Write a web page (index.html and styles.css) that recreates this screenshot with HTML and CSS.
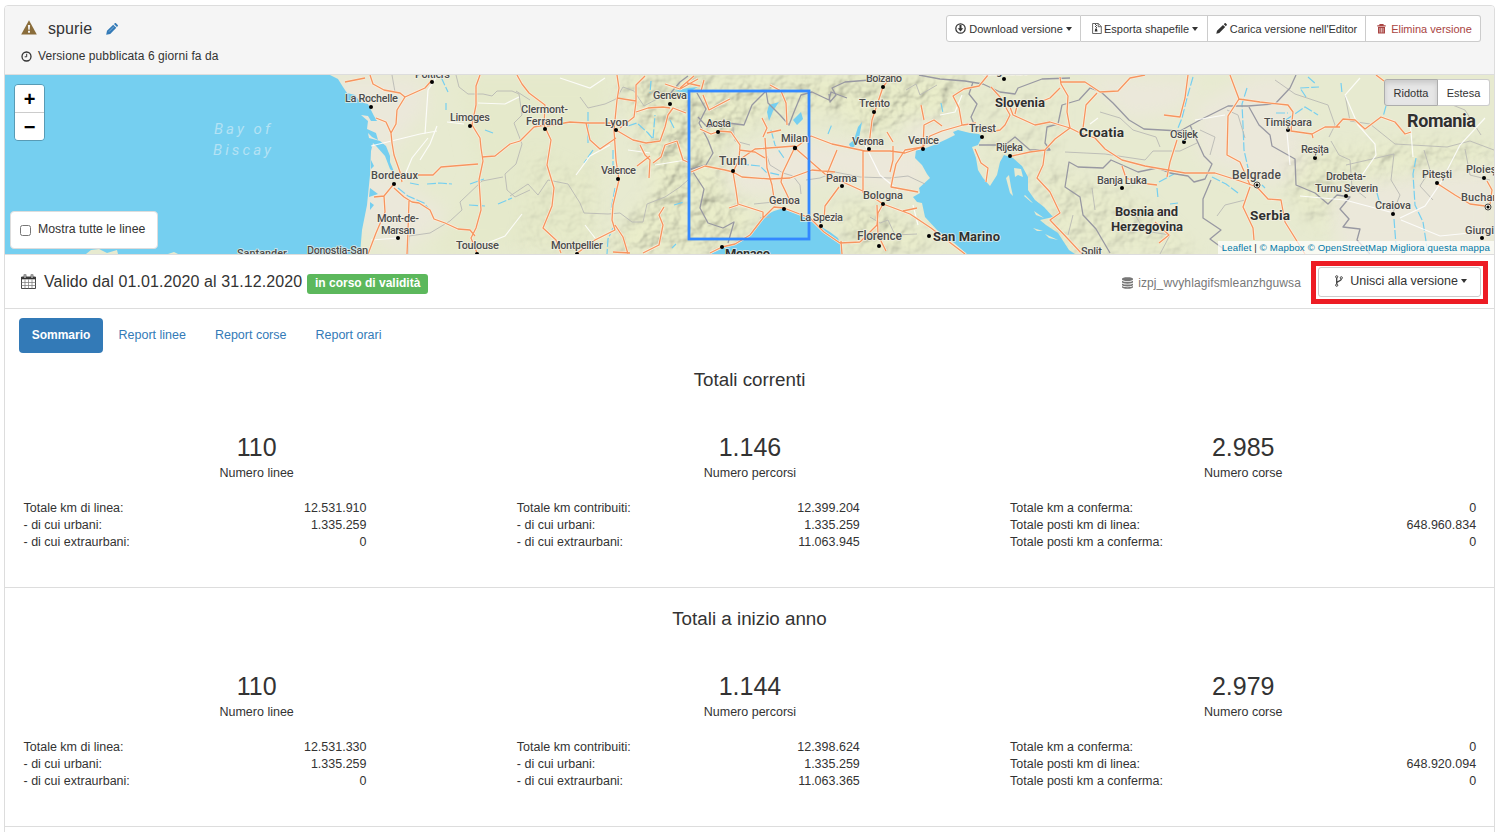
FILE: index.html
```html
<!DOCTYPE html>
<html lang="it">
<head>
<meta charset="utf-8">
<title>Versione spurie</title>
<link rel="stylesheet" href="styles.css">
</head>
<body>
<main class="panel">
  <header class="head">
    <div class="head-info">
      <h1 class="title">
        <svg class="ic-warn" width="16" height="15" viewBox="0 0 16 15"><path d="M8 0.3 15.8 14.6H.2z" fill="#8a6d3b"/><path d="M6.9 5h2.2l-.4 4.8H7.3zM7 10.8h2v1.900H7z" fill="#f5f5f5"/></svg>
        <span class="name">spurie</span>
        <svg class="ic-pen" width="12" height="12" viewBox="0 0 12 12" fill="#337ab7"><path d="M.2 11.800 1 7.800 7.200 1.700l3.100 3.100L4.200 11zM8 1.100l.8-.8c.4-.4.8-.4 1.200 0l1.700 1.700c.4.4.4.8 0 1.200l-.8.8z"/><path d="M3 8.600 8 3.600" stroke="#9cc3e4" stroke-width=".7" fill="none"/></svg>
      </h1>
      <p class="published">
        <svg width="11" height="11" viewBox="0 0 11 11" fill="none" stroke="#333" stroke-width="1.300"><circle cx="5.500" cy="5.500" r="4.500"/><path d="M5.700 2.800v3H3.700" stroke-width="1"/></svg>
        Versione pubblicata 6 giorni fa da
      </p>
    </div>
    <div class="btn-group">
      <button class="btn b1"><svg width="11" height="11" viewBox="0 0 11 11" fill="none" stroke="#333"><circle cx="5.500" cy="5.500" r="4.700" stroke-width="1.200"/><path d="M5.500 2v4" stroke-width="2"/><path d="M2.700 5.200h5.600L5.500 8.500z" fill="#333" stroke="none"/></svg>Download versione<i class="caret"></i></button>
      <button class="btn b2"><svg width="10" height="11" viewBox="0 0 10 11" fill="none" stroke="#555" stroke-width=".9"><path d="M.6.5h5.700l3 3v7H.6zM6.200.5v3.200h3"/><path d="M3.500 1v1M4.500 2v1M3.500 3v1M4.500 4v1" stroke="#333"/><path d="M3.300 5.500h1.600l.6 3H2.700z" fill="#333" stroke="none"/></svg>Esporta shapefile<i class="caret"></i></button>
      <button class="btn b3"><svg width="11" height="11" viewBox="0 0 11 11" fill="#333"><path d="M.3 10.700 1 7.700 7 1.900l2.200 2.200L3.300 10zM7.800 1.200l.9-.9c.3-.3.7-.3 1 0l1 1c.3.3.3.7 0 1l-.9.9z"/></svg>Carica versione nell'Editor</button>
      <button class="btn b4"><svg width="9" height="10" viewBox="0 0 9 10"><path d="M3 1.200V.6h3v.6M.3 1.900h8.400" stroke="#a94442" fill="none" stroke-width="1.200"/><path d="M1 3h7v6.500H1z" fill="#a94442"/><path d="M2.900 4v4.500M4.500 4v4.500M6.100 4v4.500" stroke="#fff" stroke-width=".6"/></svg>Elimina versione</button>
    </div>
  </header>

  <section class="map">
    <svg class="map-canvas" width="1489" height="179" viewBox="5 75 1489 179">
      <defs>
        <filter id="soft" x="-30%" y="-30%" width="160%" height="160%"><feGaussianBlur stdDeviation="9"/></filter>
        <filter id="relief" x="0" y="0" width="100%" height="100%">
          <feTurbulence type="fractalNoise" baseFrequency=".055" numOctaves="3" seed="7"/>
          <feColorMatrix type="matrix" values="0 0 0 0 0  0 0 0 0 0  0 0 0 0 0  1 0 0 0 0"/>
          <feDiffuseLighting surfaceScale="7" diffuseConstant="1.200" lighting-color="#dde0b4"><feDistantLight azimuth="225" elevation="55"/></feDiffuseLighting>
        </filter>
        <mask id="hills">
          <g fill="#fff" filter="url(#soft)">
            <path d="M620 75H965L950 112 905 120 875 140 840 112 770 112 730 135 712 160 730 200 760 220 720 254H600L655 190 640 130z"/>
            <path d="M835 205 870 202 940 240 920 254H850z" opacity=".8"/>
            <path d="M530 150 600 180 600 254H520z" opacity=".35"/>
            <path d="M1030 180 1060 170 1140 200 1200 254H1060z" opacity=".6"/>
            <path d="M1290 155 1420 140 1495 145V165L1420 168 1340 180 1320 230 1290 200z" opacity=".65"/>
            <path d="M960 90H1060V180H1000z" opacity=".3"/>
          </g>
        </mask>
      </defs>
      <rect x="5" y="75" width="1490" height="180" fill="#e7ead0"/>
      <g filter="url(#soft)">
        <path d="M330 75H420L430 105 380 165 450 215 400 254 340 210z" fill="#ebe8da"/>
        <path d="M730 155 790 140 870 145 925 150V195L880 190 830 175 770 195 730 190zM905 120 960 125 950 150 910 145z" fill="#ece8da"/>
        <path d="M1195 105 1255 75H1290L1310 170 1270 185 1200 160zM1330 190 1495 165V254H1340zM1080 75 1200 80 1180 110 1130 120z" fill="#ebe8da"/>
        <path d="M460 75 610 75 590 245 430 254 480 180z" fill="#e5e9cb"/>
      </g>
      <rect x="5" y="75" width="1490" height="180" filter="url(#relief)" mask="url(#hills)" opacity=".42"/>

      <g fill="#75cff0">
        <path d="M5 75H330L338 79 343 87 347 93 355 95 360 102 368 104 374 116 377 121 371 121 368 116 361 115 368 121 367 129 376 133 378 140 372 137 368 133 369 138 380 141 386 146 390 156 390 162 395 174 390 169 385 156 377 147 373 143 371 151 370 175 367 205 362 230 360 254H178L174 252 168 254H118L117 250 107 253 99 249 91 250 86 254H5z"/>
        <path d="M371 160l3 6-3 3zM370 188l8 6-9 3zM370 202l4 3-4 5z"/>
        <path d="M736 244 748 238 760 221 766 215 774 211 784 208 795 211 808 217 820 226 830 232 838 238 841 245 842 254H710L723 247z"/>
        <path d="M923 149 934 145 947 139 955 135 953 132 958 130 970 133 979 134 982 137 978 145 972 147 976 158 978 170 983 178 990 186 997 175 1000 162 1004 155 1013 158 1022 166 1028 177 1028 190 1035 200 1044 207 1053 217 1040 220 1046 225 1058 233 1069 250 1075 254H967L953 242 937 230 925 217 922 203 917 202 913 197 920 193 919 188 930 178 927 174 922 165 915 158 916 150z"/>
        <path d="M674 91l14-3 10-1-11 6zM769 105l10-3-6 9-4 10-2-9zM793 120l8-8 2 7-6 6zM853 143l5-16 4-5-3 16-5 9zM849 144l5-4 3 4-6 5z"/>
      </g>
      <g fill="#e7ead0"><path d="M1006 178l3-3 2 12 2 9-3-3zM1014 168l7 1 2 8-5-2-3 2zM1025 195l8 8-2-1-7-6zM1034 211l10 7-8-3zM1040 221l20 8-9-3zM1045 234l13 6-9-2z"/><path d="M1033 228l10 3-6 0z"/></g>

      <!-- rivers -->
      <g class="river">
        <path d="M410 183 420 185M427 184 440 183 452 184M470 184 484 179M441 77 448 92M446 103 446 110M485 130 493 133M398 188 408 196 424 203 432 213M469 205 485 206M498 204 512 198"/>
        <path d="M628 126 637 123 648 133 653 139 655 115M651 81 650 93M613 150 613 166M615 188 611 210M613 228 608 239 607 254M588 112 588 145M593 150 584 163M670 120 674 128M674 205 684 202M672 248 676 244"/>
        <path d="M740 164 760 166 766 172 780 175M771 130 775 145 784 158M828 134 832 124M941 103 943 113"/>
        <path d="M1193 77 1187 98 1182 118 1178 128M1247 88 1242 104 1243 125 1244 150 1248 168M1212 177 1226 184 1238 193M1159 182 1174 174M1157 188 1158 198M1170 204 1178 203"/>
        <path d="M1386 106 1383 117M1416 158 1413 174 1415 205 1423 222 1428 254M1377 193 1380 204M1394 219 1396 245M1277 126 1305 107 1318 115M1306 97 1300 88 1319 87M1276 113 1288 113M1262 185 1265 188M1308 77 1316 84M1341 83 1342 93"/>
      </g>
      <!-- regional and national boundaries -->
      <g class="region">
        <path d="M392 75 395 92M456 75 459 87 468 94 483 94 492 96 497 91 512 91 519 94 522 115 514 123 522 144 516 164 505 174 507 190 515 197 530 190M408 254 409 236 430 233 450 221 462 210 460 202 482 181 503 177"/>
        <path d="M510 196 528 184 538 195 548 180 568 184 580 203 584 213 608 214 620 213 632 222 643 222 647 204 665 197 680 187 688 180M580 97 588 108 605 104 616 99 623 87 634 91 644 106 657 99M516 91 530 100"/>
        <path d="M733 127 735 141 750 145M767 156 770 165 783 173 793 176 800 185 801 194M754 204 774 202 790 200M760 218 771 217M806 180 820 178 835 172 860 177 890 178 908 176 925 184M870 217 880 223 888 220 895 235 917 234M906 90 916 84 920 95 937 85"/>
        <path d="M1100 112 1120 118 1133 130 1156 137 1160 147M1065 152 1105 154 1145 160 1153 151 1180 151 1197 143M1073 215 1068 235M1135 215 1145 231 1170 235 1160 254M1092 188 1095 210M1200 130 1215 137 1210 155M1227 110 1238 115 1245 138M1217 216 1225 205 1245 200"/>
        <path d="M1275 80 1295 94 1328 105 1335 125 1329 137M1345 95 1350 121 1370 124 1395 144 1447 147 1470 141 1494 150M1331 141 1339 155 1350 160 1352 187 1366 198M1346 165 1394 154 1391 180 1400 195 1392 215M1424 150 1430 170 1420 186 1433 200M1440 100 1465 110 1481 135M1465 149 1470 175 1490 180"/>
      </g>
      <g class="border">
        <path d="M669 95 680 82 688 76M697 93 706 109 699 123 708 140 713 153 706 165 691 169 704 189 700 208 708 223 723 228 734 222 728 243M698 117 707 127 728 123 744 125 752 105 766 91M766 91 768 103 780 115 789 125 794 112 801 95 812 92 829 100 831 92 847 98"/>
        <path d="M829 94 830 102 836 95 832 88 845 82 870 80 870 75M919 75 940 79 965 81 983 84 1000 92 1015 94 1018 88 1042 79 1070 78M973 82 969 94 977 104 971 117 977 131M979 145 994 145 1005 145 1015 137 1030 150 1050 150 1045 143 1047 127 1058 124 1062 105 1079 100 1090 88 1101 92 1113 103 1129 120 1144 129 1180 131 1200 120 1228 106 1248 106 1275 104 1290 88 1296 75"/>
        <path d="M1190 125 1199 145 1204 156 1212 164 1205 179 1194 182 1188 176 1170 173 1157 168 1138 172 1111 160 1103 168 1078 167 1069 162 1065 187 1080 197 1083 215 1096 229 1110 253M1211 180 1203 199 1203 218 1221 230 1210 239 1225 250"/>
        <path d="M1249 107 1259 125 1270 135 1272 146 1295 159 1296 185 1315 193 1328 204 1337 195 1350 197 1340 209 1349 219 1343 227 1360 229 1357 240 1370 254"/>
      </g>
      <!-- minor roads -->
      <g class="minor">
        <path d="M371 146 420 134 437 131M420 160 430 144 437 126M425 134 428 90 436 78M478 103 505 104 519 97M447 122 464 124M371 240 398 238M480 246 505 236 522 214M402 182 412 158 428 138M560 78 590 88 605 78M610 145 590 156 576 175M585 225 595 238M655 165 686 160M628 150 650 153M865 145 880 175 898 190M913 205 918 225M940 115 955 112 962 95M1287 133 1290 165M1360 78 1345 95 1358 125 1375 144 1376 155 1360 178M1400 218 1425 206 1440 184 1460 145 1485 118M1300 196 1345 200 1390 212M1401 220 1440 236 1480 232M1410 120 1413 157M1195 120 1225 115M1090 124 1098 118"/>
      </g>
      <!-- motorways: pale casing below, orange line on top -->
      <g class="casing"><g id="roads">
        <path d="M370 75 373 84 384 90 400 93 405 97M345 82 365 78M405 97 397 110 396 124 391 133 392 143 394 155 400 172 402 182M480 75 476 86 476 105 472 125 480 138 481 148 483 161 479 180 481 210 476 228 471 238 477 253M394 188 404 197 412 202 419 203 430 210 434 219 445 223 458 229 470 230 475 236M393 185 384 196 385 212 376 233 368 254M384 196 374 197M409 201 408 230 407 254M418 175 433 175 441 167 478 164M391 133 386 122 376 118M405 97 425 88 432 80M482 157 495 156 510 144 520 141 534 127 545 125M517 75 522 84 529 93 545 105 544 125 551 140 547 165 554 188 552 206 543 228 556 240 561 253M547 126 570 122 586 123 612 123M586 123 590 140 600 149 616 138M617 75 619 88 617 100 614 130 616 160 619 180 613 205 612 220 615 230 595 240 576 254M615 225 623 237 628 254M613 252 630 253M616 130 633 140 646 143 660 141 665 127 668 115 673 108 686 113M620 128 634 117 636 102 636 85 645 76M617 98 636 101M636 112 648 108 663 107 670 108M640 145 645 155 650 160 649 178M653 163 661 157 665 145 677 141 683 160 690 163M637 166 650 156M664 207 659 215 663 225 659 245 643 253M665 84 680 89 698 79M694 76 680 88M687 83 700 86"/>
        <path d="M691 172 705 166 725 170 733 172 739 160 755 149 795 146M795 148 811 136 832 144 865 151 890 151 905 153 923 147 930 136 942 131 963 125 976 123M733 172 742 177 770 179 790 178 812 170 835 172M733 172 736 190 738 204 763 212 763 218 750 235 735 244 722 247 710 253M738 205 729 208M763 218 774 207 784 208M795 147 783 172 781 182 792 205M765 138 767 168 772 185 775 205M763 137 767 128 762 118M767 133 781 130M787 125 786 103 781 91 770 85M703 95 709 110 730 99M701 91 704 80M718 131 731 132 740 145 739 160M700 129 711 134 717 132M739 150 755 152 765 158M795 148 825 174 865 192 883 204 910 214 931 228 965 254M837 150 827 174M863 150 863 193M839 187 825 206 824 220M784 208 810 218 824 232 840 243 860 242M841 241 842 254M860 242 877 225 878 213 883 204M877 205 878 235 886 251M869 145 872 120 877 105 883 87 892 75M893 146 893 160 890 172M893 142 887 132M923 147 905 150 896 164 893 177 891 187 918 192M923 147 924 125 934 120 942 126M921 105 924 120M962 125 959 108 953 96 964 89 979 86 988 75M903 211 917 208M991 87 1000 97 1010 115 1005 125 1000 130 990 132M975 149 981 163 988 168 986 182M1012 156 1030 152 1045 150 1043 165 1037 178 1050 192 1060 213 1050 220 1069 240 1082 254M1013 115 1035 125 1050 122 1070 128 1080 133 1095 138 1105 149 1122 160 1145 166 1185 173 1215 173 1240 181 1257 187M1045 150 1055 139 1070 128M1013 115 1010 107M1015 114 1017 106"/>
        <path d="M1070 128 1067 112 1068 96 1061 84 1060 77M1040 102 1050 98 1060 88M1060 82 1085 82 1100 92 1118 91 1130 78 1145 75M1083 128 1086 105 1097 93M1177 140 1170 162 1167 177M1188 75 1185 98 1180 117 1164 115M1122 166 1126 178 1140 183 1157 185M1155 222 1169 235 1159 243M1230 75 1239 99 1228 116 1227 155 1240 162 1250 185M1239 99 1260 102 1288 105 1293 112 1291 131 1312 134 1325 127 1340 127M1250 187 1243 207 1253 228 1254 240M1257 187 1268 199 1281 200 1285 222 1305 254M1336 127 1343 119 1355 120 1365 129 1381 117 1395 122 1405 134 1411 132M1438 184 1455 195 1470 204 1485 206M1312 134 1313 138M1376 75 1384 81M1487 181 1492 190 1490 204"/>
      </g></g>
      <use href="#roads" class="motorway"/>

      <rect x="689" y="91" width="120" height="148" fill="none" stroke="#3388ff" stroke-width="2.800"/>

      <g class="dots">
        <circle cx="371" cy="107" r="2"/><circle cx="432" cy="82" r="2"/><circle cx="470" cy="126" r="2"/><circle cx="394" cy="184" r="2"/><circle cx="398" cy="238" r="2"/><circle cx="477" cy="254" r="2"/><circle cx="545" cy="129" r="2"/><circle cx="616" cy="130" r="2"/><circle cx="618" cy="179" r="2"/><circle cx="577" cy="254" r="2"/><circle cx="670" cy="104" r="2"/><circle cx="718" cy="132" r="2"/><circle cx="795" cy="148" r="2.200"/><circle cx="733" cy="171" r="2"/><circle cx="784" cy="209" r="2"/><circle cx="821" cy="226" r="2"/><circle cx="842" cy="186" r="2"/><circle cx="722" cy="247" r="2"/><circle cx="883" cy="87" r="2"/><circle cx="874" cy="112" r="2"/><circle cx="869" cy="149" r="2"/><circle cx="923" cy="149" r="2"/><circle cx="883" cy="204" r="2"/><circle cx="879" cy="246" r="2"/><circle cx="929" cy="236" r="2"/><circle cx="982" cy="137" r="2"/><circle cx="1010" cy="156" r="2"/><circle cx="1004" cy="79" r="2"/><circle cx="1184" cy="142" r="2"/><circle cx="1122" cy="188" r="2"/><circle cx="1288" cy="130" r="2"/><circle cx="1315" cy="158" r="2"/><circle cx="1346" cy="196" r="2"/><circle cx="1393" cy="214" r="2"/><circle cx="1437" cy="183" r="2"/><circle cx="1484" cy="178" r="2"/><circle cx="1482" cy="238" r="2"/>
        <g fill="#f2efe4" stroke="#222" stroke-width=".8"><circle cx="1257" cy="185" r="3"/><circle cx="1488" cy="207" r="3"/></g><circle cx="1257" cy="185" r="1.500"/><circle cx="1488" cy="207" r="1.500"/>
      </g>
      <g class="places">
        <text x="415" y="78" textLength="35">Poitiers</text><text x="345" y="102" textLength="53">La Rochelle</text><text x="450" y="121" textLength="40">Limoges</text><text x="371" y="179" textLength="47">Bordeaux</text><text x="377" y="222" textLength="42">Mont-de-</text><text x="381" y="234" textLength="34">Marsan</text><text x="456" y="249" textLength="43">Toulouse</text><text x="237" y="257" textLength="50">Santander</text><text x="307" y="254" textLength="61">Donostia-San</text>
        <text x="521" y="113" textLength="47">Clermont-</text><text x="526" y="125" textLength="37">Ferrand</text><text x="605" y="126" textLength="23">Lyon</text><text x="601" y="174" textLength="35">Valence</text><text x="551" y="249" textLength="52">Montpellier</text><text x="653" y="99" textLength="34">Geneva</text>
        <text x="706" y="127" textLength="25">Aosta</text><text x="781" y="142" textLength="27">Milan</text><text class="mid" x="719" y="165" textLength="28">Turin</text><text x="769" y="204" textLength="31">Genoa</text><text x="800" y="221" textLength="43">La Spezia</text><text x="826" y="182" textLength="31">Parma</text><text x="866" y="82" textLength="36">Bolzano</text><text x="859" y="107" textLength="31">Trento</text><text x="852" y="145" textLength="32">Verona</text><text x="908" y="144" textLength="31">Venice</text><text x="863" y="199" textLength="40">Bologna</text><text class="mid" x="857" y="240" textLength="45">Florence</text><text x="969" y="132" textLength="27">Triest</text><text x="996" y="151" textLength="27">Rijeka</text><text x="983" y="75" textLength="44">Klagenfurt</text>
        <text x="1170" y="138" textLength="28">Osijek</text><text x="1097" y="184" textLength="50">Banja Luka</text><text class="mid" x="1232" y="179" textLength="49">Belgrade</text><text x="1081" y="255" textLength="21">Split</text><text x="1264" y="126" textLength="48">Timișoara</text><text x="1301" y="153" textLength="28">Reșița</text><text x="1326" y="180" textLength="40">Drobeta-</text><text x="1315" y="192" textLength="63">Turnu Severin</text><text x="1375" y="209" textLength="36">Craiova</text><text x="1422" y="178" textLength="30">Pitești</text><text x="1466" y="173" textLength="37">Ploiești</text><text x="1461" y="201" textLength="51">Bucharest</text><text x="1465" y="234" textLength="35">Giurgiu</text>
      </g>
      <g class="countries">
        <text x="995" y="107" textLength="50">Slovenia</text><text class="mid" x="1079" y="137" textLength="45">Croatia</text><text x="933" y="241" textLength="67">San Marino</text><text x="725" y="258" textLength="45">Monaco</text><text x="1115" y="216" textLength="63">Bosnia and</text><text x="1111" y="231" textLength="72">Herzegovina</text><text class="mid" x="1250" y="220" textLength="40">Serbia</text><text class="big" x="1407" y="127" textLength="69">Romania</text>
      </g>
      <g class="sea"><text x="214" y="134" textLength="56">Bay of</text><text x="213" y="155" textLength="58">Biscay</text></g>
    </svg>
    <div class="zoomer"><button>+</button><button>−</button></div>
    <label class="show-all"><input type="checkbox">Mostra tutte le linee</label>
    <div class="size-switch"><button class="on">Ridotta</button><button>Estesa</button></div>
    <div class="credits"><a>Leaflet</a> | <a>© Mapbox</a> <a>© OpenStreetMap</a> <a>Migliora questa mappa</a></div>
  </section>

  <section class="validity">
    <svg class="ic-cal" width="15" height="15" viewBox="0 0 15 15" fill="none" stroke="#333"><path d="M.5 3h14v11.500H.5z" stroke-width=".9"/><path d="M.5 8.500h14M.5 11.500h14M4 5.500v9M7.500 5.500v9M11 5.500v9" stroke="#777" stroke-width=".7"/><path d="M.5 4.200h14" stroke-width="2.200"/><path d="M4 .4v4.200M11 .4v4.200" stroke-width="2.600"/><path d="M4 1v3M11 1v3" stroke="#fff" stroke-width="1"/></svg>
    <span class="range">Valido dal 01.01.2020 al 31.12.2020</span>
    <span class="badge">in corso di validità</span>
    <span class="db"><svg width="11" height="12" viewBox="0 0 11 12" fill="#777"><path d="M0 1.700C0 .9 2 .2 5.500.2S11 .9 11 1.700v.8C11 3.300 9 4 5.500 4S0 3.300 0 2.500zM0 3.700c1 .9 3 1.100 5.500 1.100S10 4.600 11 3.700v1.600c0 .8-2 1.400-5.500 1.400S0 6.100 0 5.300zM0 6.400c1 .9 3 1.100 5.500 1.100S10 7.300 11 6.400V8c0 .8-2 1.400-5.500 1.400S0 8.800 0 8zM0 9.100c1 .9 3 1.100 5.500 1.100S10 10 11 9.100v1.200c0 .8-2 1.500-5.500 1.500S0 11.100 0 10.300z"/></svg>izpj_wvyhlagifsmleanzhguwsa</span>
    <div class="highlight"><button class="merge"><svg width="8" height="12" viewBox="0 0 8 12" fill="none" stroke="#444"><circle cx="1.700" cy="1.800" r="1.100"/><circle cx="1.700" cy="10.200" r="1.100"/><circle cx="6.300" cy="2.800" r="1.100"/><path d="M1.700 3v6M6.300 4c0 2.500-4.400 1.800-4.600 4.200" stroke-width="1.300"/></svg>Unisci alla versione<i class="caret"></i></button></div>
  </section>

  <nav class="tabs"><a class="active">Sommario</a><a>Report linee</a><a>Report corse</a><a>Report orari</a></nav>

  <section class="totals first">
    <h2>Totali correnti</h2>
    <div class="cols">
      <div class="col"><strong>110</strong><p>Numero linee</p>
        <dl><dt>Totale km di linea:</dt><dd>12.531.910</dd><dt>- di cui urbani:</dt><dd>1.335.259</dd><dt>- di cui extraurbani:</dt><dd>0</dd></dl></div>
      <div class="col"><strong>1.146</strong><p>Numero percorsi</p>
        <dl><dt>Totale km contribuiti:</dt><dd>12.399.204</dd><dt>- di cui urbani:</dt><dd>1.335.259</dd><dt>- di cui extraurbani:</dt><dd>11.063.945</dd></dl></div>
      <div class="col wide"><strong>2.985</strong><p>Numero corse</p>
        <dl><dt>Totale km a conferma:</dt><dd>0</dd><dt>Totale posti km di linea:</dt><dd>648.960.834</dd><dt>Totale posti km a conferma:</dt><dd>0</dd></dl></div>
    </div>
  </section>

  <section class="totals">
    <h2>Totali a inizio anno</h2>
    <div class="cols">
      <div class="col"><strong>110</strong><p>Numero linee</p>
        <dl><dt>Totale km di linea:</dt><dd>12.531.330</dd><dt>- di cui urbani:</dt><dd>1.335.259</dd><dt>- di cui extraurbani:</dt><dd>0</dd></dl></div>
      <div class="col"><strong>1.144</strong><p>Numero percorsi</p>
        <dl><dt>Totale km contribuiti:</dt><dd>12.398.624</dd><dt>- di cui urbani:</dt><dd>1.335.259</dd><dt>- di cui extraurbani:</dt><dd>11.063.365</dd></dl></div>
      <div class="col wide"><strong>2.979</strong><p>Numero corse</p>
        <dl><dt>Totale km a conferma:</dt><dd>0</dd><dt>Totale posti km di linea:</dt><dd>648.920.094</dd><dt>Totale posti km a conferma:</dt><dd>0</dd></dl></div>
    </div>
  </section>
</main>
</body>
</html>
```
FILE: styles.css
```css
* { box-sizing: border-box; }
html { overflow: hidden; }
body { margin: 0; padding: 5px 10px 0 4px; height: 832px; overflow: hidden; background: #fff; color: #333; font: 12px/17px "Liberation Sans", Arial, sans-serif; }
h1, h2, p, dl, dd { margin: 0; font-weight: 400; }
button { font-family: inherit; color: #333; background: #fff; border: 1px solid #ccc; margin: 0; padding: 0; }
svg { flex: none; }

.panel { width: 1491px; height: 840px; border: 1px solid #ddd; border-radius: 4px 4px 0 0; }

.head { display: flex; justify-content: space-between; height: 69px; padding: 9px 13px 0 16px; background: #f5f5f5; border-bottom: 1px solid #ddd; border-radius: 3px 3px 0 0; }
.title { display: flex; align-items: center; height: 26px; font-size: 16px; letter-spacing: .1px; }
.ic-warn { margin-top: -2px; }
.ic-pen { margin-top: 2px; }
.name { margin: 0 14px 0 11px; }
.published { display: flex; align-items: center; gap: 6px; margin-top: 7px; letter-spacing: .09px; }

.btn-group { display: flex; height: 27px; }
.btn { display: flex; align-items: center; justify-content: center; height: 27px; font-size: 11px; white-space: nowrap; }
.btn + .btn { border-left: 0; }
.btn svg { margin-right: 3px; }
.b1 { width: 135px; border-radius: 3px 0 0 3px; }
.b2 { width: 127px; padding-left: 2px; }
.b2 svg { margin-right: 2px; }
.b3 { width: 158px; }
.b4 { width: 115px; padding-left: 3px; border-radius: 0 3px 3px 0; color: #a94442; }
.b4 svg { margin-right: 5px; }
.caret { margin-left: 3px; border: 3.5px solid transparent; border-top: 4px solid #333; border-bottom: 0; }

.map { position: relative; height: 180px; border-bottom: 1px solid #ddd; }
.map-canvas { display: block; }
.river { fill: none; stroke: #75cff0; stroke-width: 1.2; stroke-dasharray: 9 2; }
.region { fill: none; stroke: #b9b9b4; stroke-width: .9; }
.border { fill: none; stroke: #9898a2; stroke-width: 1.3; stroke-linejoin: round; }
.minor { fill: none; stroke: #fff; stroke-width: 1.2; opacity: .85; }
.casing { fill: none; stroke: #fbeedd; stroke-width: 2.6; stroke-linejoin: round; }
.motorway { fill: none; stroke: #f6955f; stroke-width: 1.3; stroke-linejoin: round; }
.dots { fill: #000; }
.places, .countries { fill: #4c4c4c; font-family: Roboto, sans-serif; font-size: 11px; font-weight: 500; paint-order: stroke; stroke: #f5f3e8; stroke-width: 1.6px; stroke-opacity: .8; }
.places .mid { font-size: 12px; }
.countries { fill: #303030; font-size: 13px; font-weight: 700; }
.countries .mid { font-size: 13.6px; }
.countries .big { font-size: 18px; }
.sea { fill: #b3e2f4; font: italic 15px Roboto, sans-serif; }

.zoomer { position: absolute; left: 9px; top: 9px; width: 31px; border: 1px solid #589bb5; border-radius: 4px; overflow: hidden; }
.zoomer button { display: block; width: 29px; height: 27px; border: 0; font: 700 20px/28px "Liberation Sans", Arial, sans-serif; color: #000; }
.zoomer button + button { height: 28px; border-top: 1px solid #ccc; }
.show-all { position: absolute; left: 5px; top: 136px; display: flex; align-items: center; width: 148px; height: 38px; padding: 0 0 2px 9px; background: #fff; border: 1px solid #ddd; border-radius: 4px; white-space: nowrap; font-size: 12.3px; }
.show-all input { width: 11px; height: 11px; margin: 3px 7px 0 0; }
.size-switch { position: absolute; right: 4px; top: 4px; display: flex; }
.size-switch button { height: 27px; width: 52px; border-left: 0; border-radius: 0 3px 3px 0; font-size: 11px; }
.size-switch .on { width: 54px; border: 1px solid #adadad; border-radius: 3px 0 0 3px; background: #e6e6e6; box-shadow: inset 0 3px 5px rgba(0, 0, 0, .125); }
.credits { position: absolute; right: 0; bottom: 0; height: 13px; padding: 0 4px; background: rgba(255, 255, 255, .7); font-size: 9.6px; line-height: 13px; letter-spacing: .14px; white-space: nowrap; }
.credits a { color: #0078a8; }

.validity { display: flex; align-items: center; height: 54px; padding: 0 6px 0 16px; border-bottom: 1px solid #ddd; }
.ic-cal { margin: 0 8px 0 0; }
.range { font-size: 16px; letter-spacing: .09px; }
.badge { margin: 5px auto 0 5px; width: 121px; height: 20px; border-radius: 3px; background: #5cb85c; color: #fff; font-weight: 700; line-height: 19px; text-align: center; }
.db { display: flex; align-items: center; gap: 5px; margin: 3px 10px 0 0; color: #777; letter-spacing: .1px; }
.highlight { width: 177px; height: 43px; margin-top: 2px; padding: 1px 2px; border: 5px solid #ed1c24; }
.merge { display: flex; align-items: center; justify-content: center; width: 163px; height: 30px; padding: 0 0 3px 3px; border-radius: 3px; font-size: 12.5px; }
.merge svg { margin-right: 7px; }

.tabs { display: flex; gap: 2px; height: 44px; padding: 9px 0 0 14px; font-size: 12.5px; }
.tabs a { height: 35px; padding: 0 13.5px; line-height: 34px; color: #337ab7; }
.tabs .active { width: 84px; padding: 0; border-radius: 4px; background: #337ab7; color: #fff; font-size: 12px; font-weight: 700; text-align: center; }

.totals { height: 239px; padding-top: 20px; border-bottom: 1px solid #ddd; }
.totals.first { height: 235px; padding-top: 16px; }
.totals h2 { height: 22px; font-size: 18.8px; line-height: 22px; text-align: center; }
.cols { display: grid; grid-template-columns: repeat(3, 493.3px); padding: 41px 0 0 5px; font-size: 12.5px; }
.col { text-align: center; }
.col strong { display: block; font-size: 25px; font-weight: 400; line-height: 30px; }
.col p { margin-top: 3px; }
.col dl { display: grid; grid-template-columns: auto auto; justify-content: space-between; width: 343px; margin: 18px 0 0 13.5px; text-align: left; }
.col.wide dl { width: 466px; }
.col dd { text-align: right; }
```
